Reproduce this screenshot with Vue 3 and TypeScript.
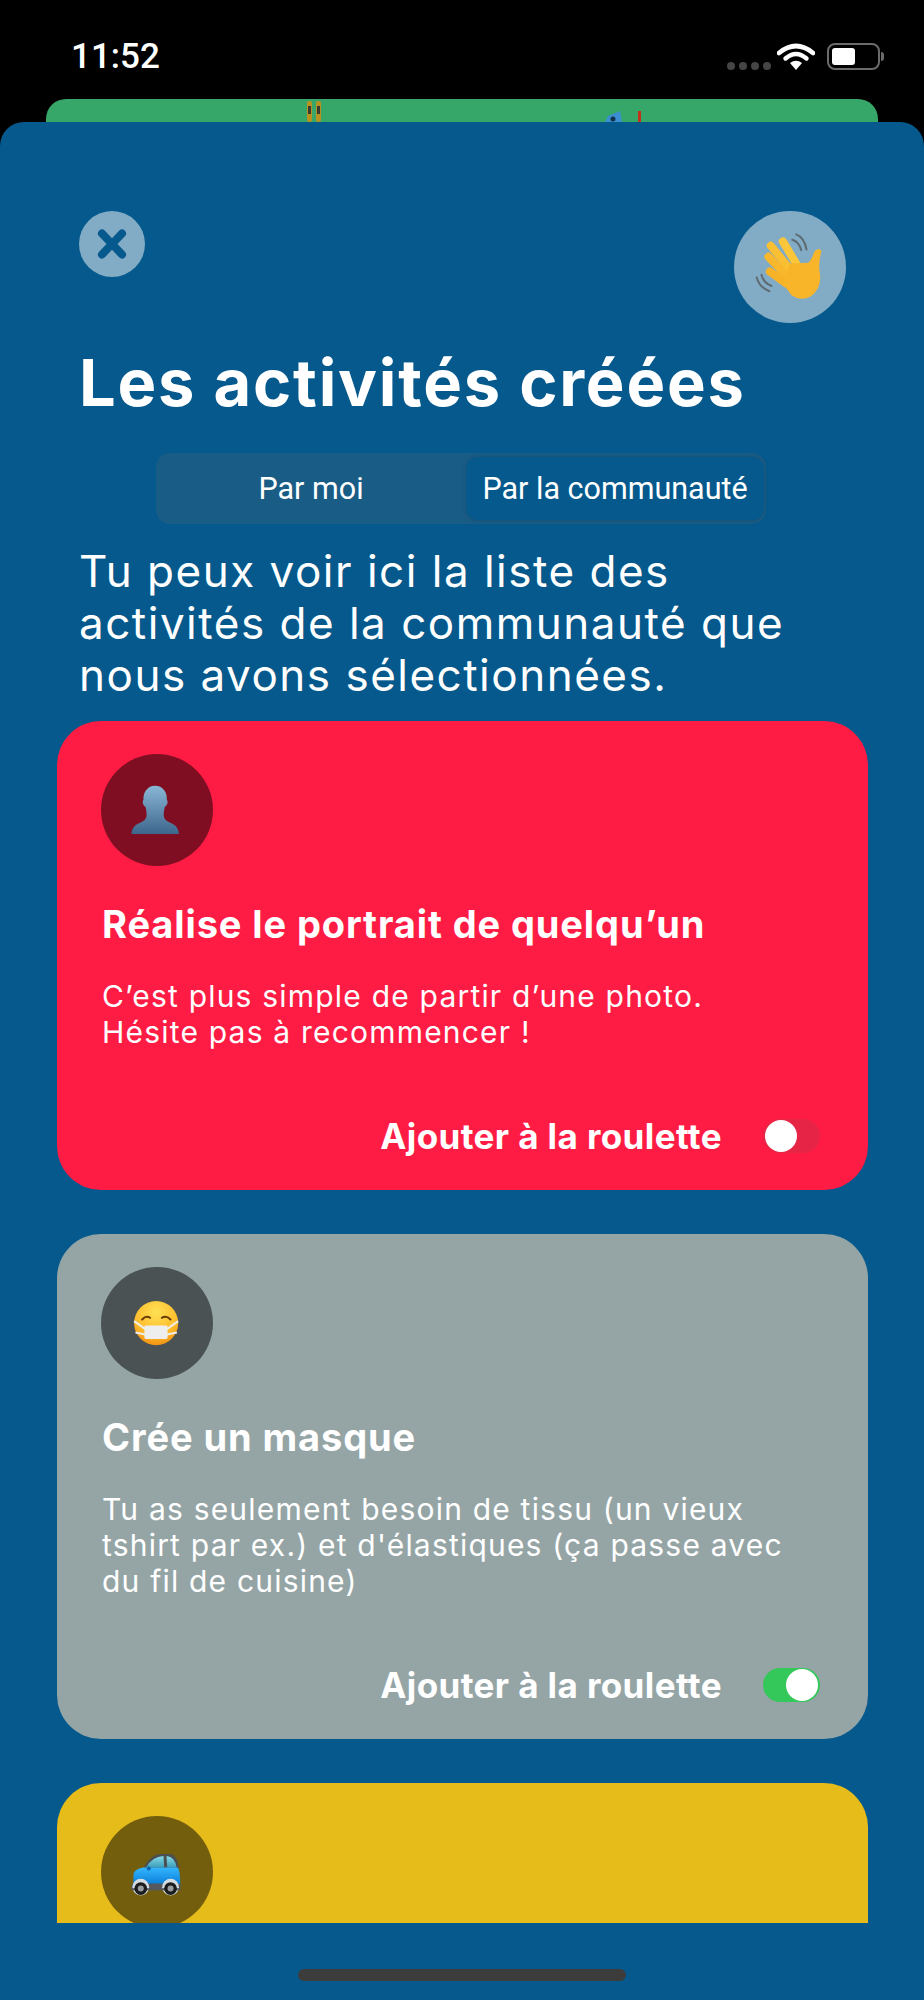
<script setup lang="ts">
interface Activity {
  id: string
  title: string
  lines: string[]
  color: string
  on: boolean
}
const activities: Activity[] = [
  { id: 'person', title: 'Réalise le portrait de quelqu’un', lines: ['C’est plus simple de partir d’une photo.', 'Hésite pas à recommencer !'], color: '#ff1c44', on: false },
  { id: 'mask', title: 'Crée un masque', lines: ['Tu as seulement besoin de tissu (un vieux', 'tshirt par ex.) et d\'élastiques (ça passe avec', 'du fil de cuisine)'], color: '#95a5a6', on: true },
  { id: 'car', title: '', lines: [], color: '#e5bc1a', on: false },
]
</script>

<template>
  <div class="screen">
    <div class="status">
      <span class="time">11:52</span>
      <div class="status-icons">
        <div class="dots"><i></i><i></i><i></i><i></i></div>
        <svg class="wifi" width="38" height="28" viewBox="0 0 38 28">
          <path d="M2 10 Q19 -4 36 10" fill="none" stroke="#fff" stroke-width="4.6" stroke-linecap="round" />
          <path d="M8.5 15.5 Q19 6.5 29.5 15.5" fill="none" stroke="#fff" stroke-width="4.4" stroke-linecap="round" />
          <path d="M13 20 Q19 15.5 25 20 L19 27 Z" fill="#fff" />
        </svg>
        <div class="battery"><div class="cell"><b></b></div><span class="nub"></span></div>
      </div>
    </div>
    <div class="peek">
      <svg width="832" height="23" viewBox="0 0 832 23">
        <g fill="#b8911f"><rect x="261" y="2" width="5" height="21" rx="2" /><rect x="270" y="2" width="5" height="21" rx="2" /></g>
        <g fill="#3a3a30"><rect x="262" y="7" width="3" height="8" /><rect x="271" y="7" width="3" height="8" /></g>
        <path d="M559 23 L562 17 L574 12 L576 23 Z" fill="#3b8fd0" />
        <circle cx="567" cy="20" r="2.500" fill="#12324a" />
        <rect x="592" y="12" width="3" height="11" fill="#c2341a" />
      </svg>
    </div>
    <div class="sheet">
      <div class="top-row">
        <button class="close" aria-label="Fermer">
          <svg width="32" height="32" viewBox="0 0 32 32">
            <path d="M6 5.500 L26 26.500 M26 5.500 L6 26.500" stroke="#05598c" stroke-width="8" stroke-linecap="round" />
          </svg>
        </button>
        <div class="wave">
          <svg width="112" height="112" viewBox="40 33 335 335">
            <g fill="none" stroke="#5f6b72" stroke-width="6" stroke-linecap="round">
              <path d="M214 119 Q234 124 241 150" />
              <path d="M226 103 Q250 112 257 148" />
              <path d="M122 224 Q128 248 152 257" />
              <path d="M108 232 Q116 262 146 273" />
            </g>
            <g fill="none" stroke-width="24" stroke-linecap="round">
              <path d="M186 124 L226 190" stroke="#fcc63a" />
              <path d="M150 137 L208 208" stroke="#fbbf34" />
              <path d="M143 170 L196 226" stroke="#f9b72c" />
              <path d="M147 214 L196 250" stroke="#f8b228" />
            </g>
            <path d="M208 190 L262 188 Q272 180 280 155 Q292 140 302 152 Q292 185 296 215 Q305 262 270 288 Q240 305 212 285 L186 250 Z" fill="#f9b52a" />
          </svg>
        </div>
      </div>
      <h1 class="title">Les activités créées</h1>
      <div class="segment">
        <div class="seg">Par moi</div>
        <div class="seg active">Par la communauté</div>
      </div>
      <p class="intro">Tu peux voir ici la liste des<br />activités de la communauté que<br />nous avons sélectionnées.</p>
      <div class="list">
        <section v-for="a in activities" :key="a.id" class="card" :style="{ backgroundColor: a.color }">
          <div class="badge">
            <svg v-if="a.id === 'person'" width="112" height="112" viewBox="35 28 335 335">
              <defs>
                <linearGradient id="bust" x1="0" y1="0" x2="0" y2="1">
                  <stop offset="0" stop-color="#8ab6d6" />
                  <stop offset="1" stop-color="#3d668c" />
                </linearGradient>
              </defs>
              <path d="M197 123 C220 123 233 142 232 165 C237 172 233 182 226 186 C222 205 218 222 236 231 C254 238 266 246 268 267 L126 267 C128 246 140 238 158 231 C176 222 172 205 168 186 C161 182 157 172 162 165 C161 142 174 123 197 123 Z" fill="url(#bust)" />
            </svg>
            <svg v-else-if="a.id === 'mask'" width="112" height="112" viewBox="33 22 335 335">
              <defs>
                <radialGradient id="face" cx="0.5" cy="0.25" r="0.85">
                  <stop offset="0" stop-color="#ffe156" />
                  <stop offset="0.6" stop-color="#fdbb2a" />
                  <stop offset="1" stop-color="#ef820a" />
                </radialGradient>
              </defs>
              <circle cx="198" cy="190" r="66" fill="url(#face)" />
              <g fill="none" stroke="#6b3b05" stroke-width="6" stroke-linecap="round">
                <path d="M156 179 Q168 166 180 174" />
                <path d="M215 174 Q228 166 241 179" />
              </g>
              <g fill="none" stroke="#efeeea" stroke-width="6">
                <path d="M132 184 L166 208" /><path d="M136 218 L166 224" />
                <path d="M264 184 L230 208" /><path d="M260 218 L230 224" />
              </g>
              <rect x="163" y="197" width="69" height="40" rx="4" fill="#eeeeee" />
            </svg>
            <svg v-else width="112" height="112" viewBox="33 20 335 335">
              <defs>
                <linearGradient id="body" x1="0" y1="0" x2="0" y2="1">
                  <stop offset="0" stop-color="#33b5ff" />
                  <stop offset="1" stop-color="#0a7fd8" />
                </linearGradient>
                <linearGradient id="glass" x1="0" y1="0" x2="0" y2="1">
                  <stop offset="0" stop-color="#86dbe8" />
                  <stop offset="1" stop-color="#3c9db8" />
                </linearGradient>
              </defs>
              <path d="M160 175 Q182 134 212 134 L240 134 Q262 136 266 180 Z" fill="#4b4f52" />
              <path d="M168 174 Q186 142 220 140 L222 174 Z" fill="url(#glass)" />
              <path d="M229 140 Q254 142 259 174 L231 174 Z" fill="url(#glass)" />
              <path d="M130 225 L130 195 Q132 178 160 174 L262 174 Q270 180 270 225 Z" fill="url(#body)" />
              <rect x="124" y="222" width="147" height="20" rx="6" fill="#55585c" />
              <circle cx="176" cy="177" r="6" fill="#0b62b0" />
              <g fill="#d5dde2">
                <circle cx="152" cy="233" r="25" /><circle cx="241" cy="233" r="25" />
              </g>
              <rect x="124" y="236" width="147" height="6" rx="3" fill="#55585c" />
              <g fill="#1c1c1e">
                <circle cx="152" cy="237" r="19" /><circle cx="241" cy="237" r="19" />
              </g>
              <g fill="#9a9da0">
                <circle cx="152" cy="237" r="9" /><circle cx="241" cy="237" r="9" />
              </g>
            </svg>
          </div>
          <template v-if="a.title">
            <h2 class="card-title">{{ a.title }}</h2>
            <p class="card-text"><template v-for="l in a.lines" :key="l">{{ l }}<br /></template></p>
            <div class="card-foot">
              <span class="foot-label">Ajouter à la roulette</span>
              <div class="toggle" :class="{ on: a.on }"><span class="knob"></span></div>
            </div>
          </template>
        </section>
      </div>
      <div class="home"></div>
    </div>
  </div>
</template>

<style scoped>
.screen {
  width: 924px;
  height: 2000px;
  background: #000;
  overflow: hidden;
  display: flex;
  flex-direction: column;
  font-family: Inter, "Liberation Sans", sans-serif;
  color: #fff;
}
.status {
  height: 99px;
  flex: none;
  box-sizing: border-box;
  padding: 37px 40px 0 71px;
  display: flex;
  justify-content: space-between;
  align-items: flex-start;
}
.time {
  font-family: Roboto, sans-serif;
  font-weight: 500;
  font-size: 35px;
  line-height: 40px;
}
.status-icons {
  display: flex;
  align-items: flex-start;
  padding-top: 6px;
}
.dots {
  display: flex;
  gap: 4px;
  margin-top: 19px;
  margin-right: 6px;
}
.dots i {
  width: 8px;
  height: 8px;
  border-radius: 50%;
  background: #454545;
}
.wifi {
  margin-right: 12px;
}
.battery {
  display: flex;
  align-items: center;
  height: 27px;
}
.cell {
  width: 53px;
  height: 27px;
  box-sizing: border-box;
  border: 2px solid #6b6b6b;
  border-radius: 8px;
  padding: 3px;
}
.cell b {
  display: block;
  width: 23px;
  height: 100%;
  background: #fff;
  border-radius: 3px;
}
.nub {
  width: 3px;
  height: 9px;
  margin-left: 1px;
  background: #6b6b6b;
  border-radius: 0 3px 3px 0;
}
.peek {
  height: 23px;
  flex: none;
  margin: 0 46px;
  background: #36a769;
  border-radius: 20px 20px 0 0;
  overflow: hidden;
}
.peek svg {
  display: block;
}
.sheet {
  flex: 1;
  background: #05598c;
  border-radius: 24px 24px 0 0;
  display: flex;
  flex-direction: column;
}
.top-row {
  display: flex;
  justify-content: space-between;
  align-items: flex-start;
  padding: 89px 78px 0 79px;
}
.close {
  width: 66px;
  height: 66px;
  padding: 0;
  border: 0;
  border-radius: 50%;
  background: #82abc5;
  display: flex;
  align-items: center;
  justify-content: center;
}
.wave {
  width: 112px;
  height: 112px;
  border-radius: 50%;
  background: #82abc5;
}
.wave svg,
.badge svg {
  display: block;
}
.title {
  margin: 21px 0 0 79px;
  font-weight: 700;
  font-size: 65px;
  line-height: 78px;
  letter-spacing: 1.800px;
  white-space: nowrap;
}
.segment {
  margin: 31px 0 0 156px;
  width: 610px;
  height: 71px;
  box-sizing: border-box;
  background: #195c85;
  border-radius: 14px;
  display: flex;
  align-items: center;
  font-family: Roboto, sans-serif;
  font-size: 30.500px;
}
.seg {
  flex: 1;
  text-align: center;
}
.active {
  flex: none;
  width: 298px;
  height: 63px;
  line-height: 63px;
  margin-right: 2px;
  background: #05598c;
  border-radius: 12px;
  box-shadow: 0 0 4px rgba(20, 60, 90, 0.35);
}
.intro {
  margin: 21px 0 0 79px;
  font-size: 44px;
  line-height: 52px;
  letter-spacing: 1.500px;
  white-space: nowrap;
}
.list {
  margin: 20px 56px 0 57px;
  height: 1202px;
  overflow: hidden;
  display: flex;
  flex-direction: column;
  gap: 44px;
}
.card {
  flex: none;
  border-radius: 44px;
  padding: 33px 45px 34px;
  box-sizing: border-box;
}
.card:last-child {
  min-height: 300px;
}
.badge {
  width: 112px;
  height: 112px;
  border-radius: 50%;
  background: rgba(0, 0, 0, 0.5);
  margin-left: -1px;
}
.card-title {
  margin: 36px 0 0;
  font-weight: 700;
  font-size: 38px;
  line-height: 44px;
  letter-spacing: 0.900px;
  white-space: nowrap;
}
.card-text {
  margin: 32px 0 0;
  font-size: 30px;
  line-height: 36px;
  letter-spacing: 1.200px;
  white-space: nowrap;
}
.card-foot {
  margin-top: 66px;
  display: flex;
  justify-content: flex-end;
  align-items: center;
  padding-right: 3px;
  gap: 41px;
}
.foot-label {
  font-weight: 700;
  font-size: 35px;
  line-height: 40px;
  letter-spacing: 0.400px;
}
.toggle {
  width: 57px;
  height: 34px;
  box-sizing: border-box;
  border-radius: 17px;
  padding: 1px 2px;
  display: flex;
  justify-content: flex-start;
  background: rgba(90, 90, 90, 0.15);
}
.toggle.on {
  background: #34c759;
  justify-content: flex-end;
}
.knob {
  width: 32px;
  height: 32px;
  border-radius: 50%;
  background: #fff;
}
.home {
  align-self: center;
  width: 328px;
  height: 12px;
  margin-top: 46px;
  border-radius: 6px;
  background: #3c3c3c;
}
</style>
